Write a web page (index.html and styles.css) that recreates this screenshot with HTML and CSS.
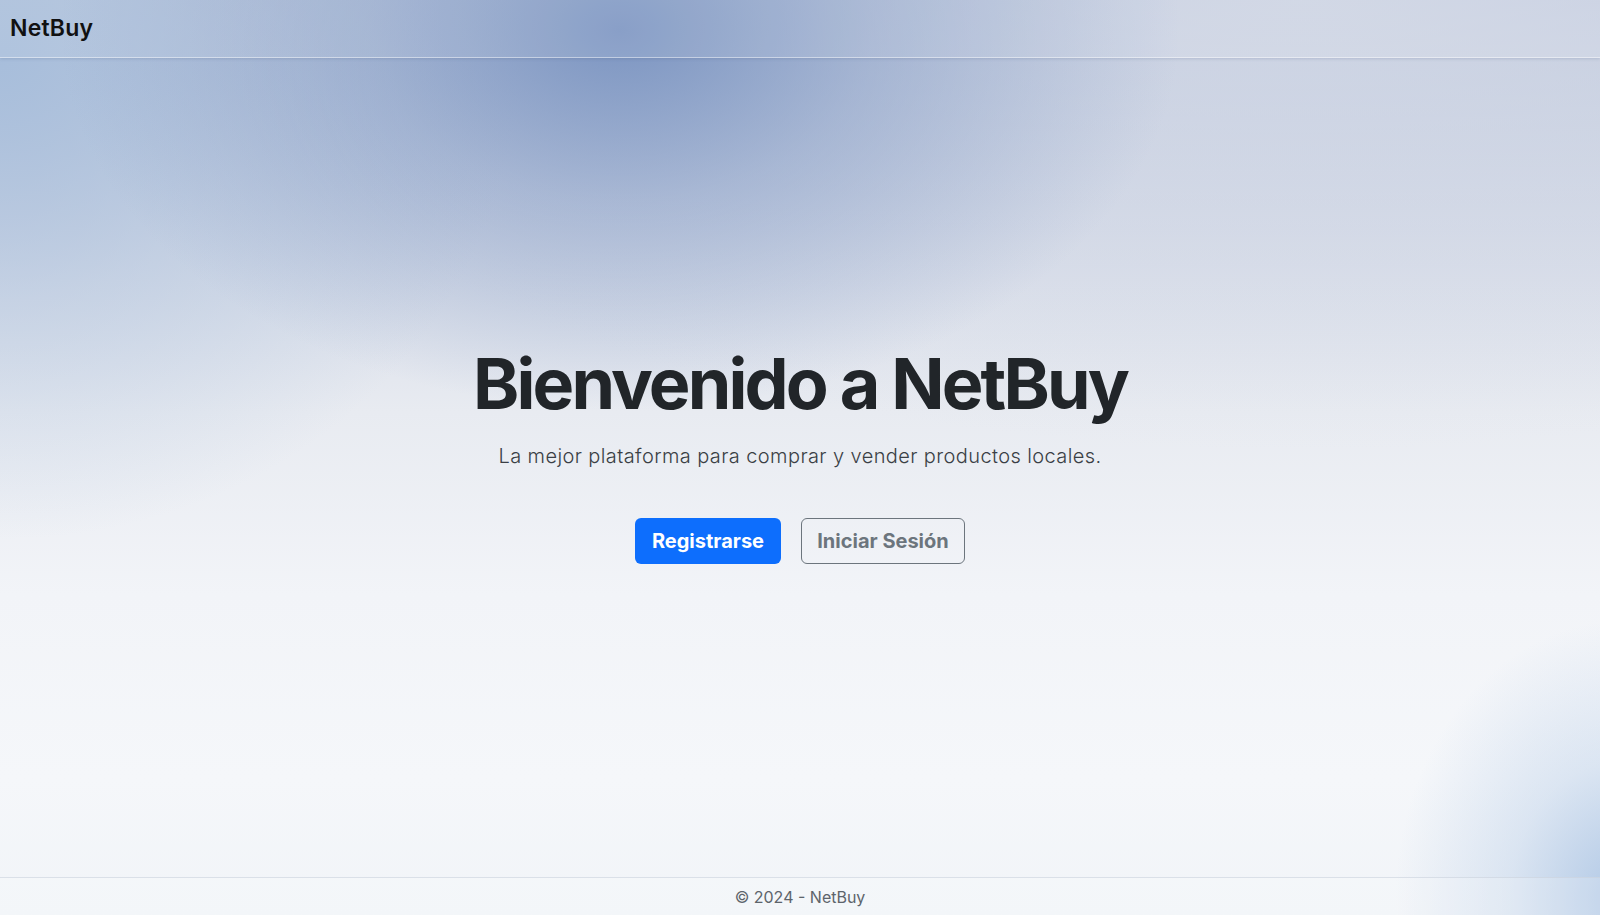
FILE: index.html
```html
<!DOCTYPE html>
<html lang="es">
<head>
<meta charset="utf-8">
<title>NetBuy</title>
<link rel="stylesheet" href="styles.css">
</head>
<body>
<header class="navbar">
  <a class="brand" href="#">NetBuy</a>
</header>
<main class="hero">
  <div class="hero-inner">
    <h1 class="hero-title">Bienvenido a NetBuy</h1>
    <p class="hero-lead">La mejor plataforma para comprar y vender productos locales.</p>
    <div class="hero-actions">
      <a class="btn btn-primary" href="#">Registrarse</a>
      <a class="btn btn-outline" href="#">Iniciar Sesión</a>
    </div>
  </div>
</main>
<footer class="footer">© 2024 - NetBuy</footer>
</body>
</html>
```
FILE: styles.css
```css
html, body { height: 100%; }
body {
  margin: 0;
  font-family: "Inter", "Open Sans", sans-serif;
  color: #212529;
  display: flex;
  flex-direction: column;
  min-height: 100vh;
  background-color: #eef0f5;
  background-image:
    radial-gradient(ellipse 560px 380px at 620px 30px, rgba(120,146,192,0.95), rgba(120,146,192,0.45) 45%, rgba(120,146,192,0) 100%),
    radial-gradient(ellipse 520px 480px at 0px 60px, rgba(166,189,219,0.95), rgba(166,189,219,0.4) 50%, rgba(166,189,219,0) 100%),
    radial-gradient(ellipse 230px 280px at 1625px 900px, rgba(172,197,228,0.95), rgba(172,197,228,0.35) 50%, rgba(172,197,228,0) 100%),
    radial-gradient(ellipse 1100px 450px at 1300px 0px, rgba(212,218,232,0.7), rgba(212,218,232,0) 100%),
    linear-gradient(180deg, #bcc6da 0%, #d3d9e6 25%, #e8ebf1 45%, #f2f4f8 65%, #f5f7fa 85%, #f1f4f8 100%);
}
.navbar {
  height: 57px;
  display: flex;
  align-items: center;
  padding: 0 10px;
  background: rgba(255,255,255,0.1);
  border-bottom: 1px solid rgba(255,255,255,0.45);
  box-shadow: 0 1px 3px rgba(60,80,120,0.18);
}
.brand {
  font-size: 23px;
  font-weight: 600;
  color: #111;
  text-decoration: none;
  letter-spacing: 0.2px;
  margin-top: -2px;
}
.hero {
  flex: 1;
  display: flex;
  align-items: center;
  justify-content: center;
  padding-bottom: 30px;
}
.hero-inner { text-align: center; }
.hero-title {
  margin: 0 0 18px;
  font-size: 70px;
  font-weight: 700;
  line-height: 1.2;
  color: #212529;
  letter-spacing: -2.85px;
}
.hero-lead {
  margin: 0 0 50px;
  font-size: 20px;
  font-weight: 300;
  color: #3a3f45;
  letter-spacing: 0.4px;
}
.hero-actions {
  display: flex;
  justify-content: center;
  gap: 20px;
}
.btn {
  display: inline-flex;
  align-items: center;
  justify-content: center;
  height: 46px;
  box-sizing: border-box;
  padding: 0;
  font-size: 20px;
  font-weight: 700;
  border-radius: 6px;
  text-decoration: none;
  border: 1px solid transparent;
  white-space: nowrap;
}
.btn-primary {
  background: #0d6efd;
  color: #fff;
  width: 146px;
}
.btn-outline {
  border-color: #6c757d;
  color: #6c757d;
  width: 164px;
}
.footer {
  height: 38px;
  display: flex;
  align-items: center;
  justify-content: center;
  font-size: 16px;
  color: #5d646b;
  background: rgba(255,255,255,0.2);
  border-top: 1px solid rgba(200,208,220,0.6);
  box-sizing: border-box;
}
```
